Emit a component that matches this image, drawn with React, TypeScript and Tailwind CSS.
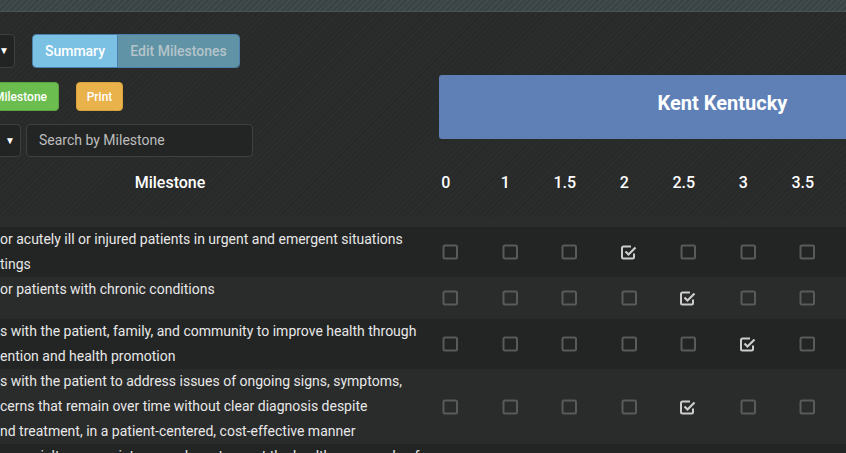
import React from 'react';

const columns = ['0', '1', '1.5', '2', '2.5', '3', '3.5'];

interface Row {
  lines: string[];
  checked: number;
}

const rows: Row[] = [
  {
    lines: ['or acutely ill or injured patients in urgent and emergent situations', 'tings'],
    checked: 3,
  },
  { lines: ['or patients with chronic conditions'], checked: 4 },
  {
    lines: ['s with the patient, family, and community to improve health through', 'ention and health promotion'],
    checked: 5,
  },
  {
    lines: [
      's with the patient to address issues of ongoing signs, symptoms,',
      'cerns that remain over time without clear diagnosis despite',
      'nd treatment, in a patient-centered, cost-effective manner',
    ],
    checked: 4,
  },
  { lines: ['s specialty-appropriate procedures to meet the health care needs of'], checked: -1 },
];

function Box({ checked }: { checked: boolean }) {
  if (checked) {
    return (
      <svg width="17" height="16" viewBox="0 0 17 16" fill="none">
        <path d="M13 9.5V13a1.5 1.5 0 0 1-1.5 1.5h-9A1.5 1.5 0 0 1 1 13V4a1.5 1.5 0 0 1 1.5-1.5H10" stroke="#cdcdcd" strokeWidth="2" />
        <path d="M4.5 7.5L7.5 10.5L14.5 3.5" stroke="#cdcdcd" strokeWidth="2.2" />
      </svg>
    );
  }
  return (
    <svg width="17" height="16" viewBox="0 0 17 16" fill="none">
      <rect x="1.5" y="1.5" width="13.5" height="13" rx="1.5" stroke="#595b5b" strokeWidth="2" />
    </svg>
  );
}

export default function App() {
  return (
    <div className="w-[846px] h-[453px] overflow-hidden font-[Roboto,sans-serif] text-white bg-[#2a2c2c] bg-[repeating-linear-gradient(135deg,#2b2d2d_0px,#2b2d2d_2px,#282a2a_2px,#282a2a_4px)]">
      {/* top strip */}
      <div className="h-[12px] border-b border-[#4b5454] bg-[repeating-linear-gradient(135deg,#414b4b_0px,#414b4b_2px,#3a4343_2px,#3a4343_4px)]" />

      {/* controls + banner */}
      <div className="flex">
        <div className="w-[439px] shrink-0 flex flex-col pt-[22px]">
          <div className="flex items-center gap-[17px]">
            <div className="-ml-[45px] w-[60px] h-[34px] rounded-[4px] border border-[#3e4040] bg-[#222424] flex items-center justify-end pr-[5px]">
              <span className="text-[10px] leading-none text-white">▼</span>
            </div>
            <div className="flex h-[34px] rounded-[4px] border border-[#4b7fae] overflow-hidden text-[14px] font-medium">
              <div className="w-[85px] bg-[#7ac1e4] text-white flex items-center justify-center border-r border-[#4b7fae]">Summary</div>
              <div className="w-[121px] bg-[#6093a5] text-[#b4c4ca] flex items-center justify-center">Edit Milestones</div>
            </div>
          </div>

          <div className="flex items-center gap-[17px] mt-[14px]">
            <div className="-ml-[40px] w-[99px] h-[29px] rounded-[4px] border border-[#5da43f] bg-[#6cbd4f] text-[12px] font-medium flex items-center justify-end pr-[11px]">
              Add Milestone
            </div>
            <div className="w-[47px] h-[29px] rounded-[4px] border border-[#d9a23e] bg-[#e9b24b] text-[12px] font-medium flex items-center justify-center">
              Print
            </div>
          </div>

          <div className="flex items-center gap-[5px] mt-[13px]">
            <div className="-ml-[40px] w-[61px] h-[33px] rounded-[4px] border border-[#3e4040] bg-[#222424] flex items-center justify-end pr-[5px]">
              <span className="text-[10px] leading-none text-white">▼</span>
            </div>
            <div className="w-[227px] h-[33px] rounded-[4px] border border-[#3f4141] bg-[#232525] flex items-center pl-[12px] text-[14px] text-[#bdbdbd]">
              Search by Milestone
            </div>
          </div>
        </div>

        <div className="pt-[63px]">
          <div className="w-[567px] h-[64px] rounded-[3px] bg-[#5e80b6] flex items-center justify-center pb-[8px] text-[20px] font-bold">
            Kent Kentucky
          </div>
        </div>
      </div>

      {/* header */}
      <div className="flex items-center h-[44px] mt-[4px] text-[16px] font-medium">
        <div className="w-[421px] shrink-0">
          <div className="w-[340px] text-center">Milestone</div>
        </div>
        {columns.map((c) => (
          <div key={c} className="w-[59.5px] shrink-0 text-center pr-[10px]">{c}</div>
        ))}
      </div>
      <div className="h-[12px]" />
      <div className="h-[10px] bg-[#2b2c2c]" />

      {/* rows */}
      <div className="flex flex-col">
        {rows.map((row, i) => (
          <div key={i} className={`flex ${i % 2 === 0 ? 'bg-[#232525]' : 'bg-[#2a2b2b]'}`}>
            <div className="w-[421px] shrink-0 text-[14px] leading-[25px] text-[#e8e8e8] whitespace-nowrap overflow-hidden">
              {row.lines.map((l, j) => (
                <div key={j}>{l}</div>
              ))}
            </div>
            {columns.map((c, k) => (
              <div key={c} className="w-[59.5px] shrink-0 flex items-center justify-center py-[13px]">
                <Box checked={row.checked === k} />
              </div>
            ))}
          </div>
        ))}
      </div>
    </div>
  );
}
